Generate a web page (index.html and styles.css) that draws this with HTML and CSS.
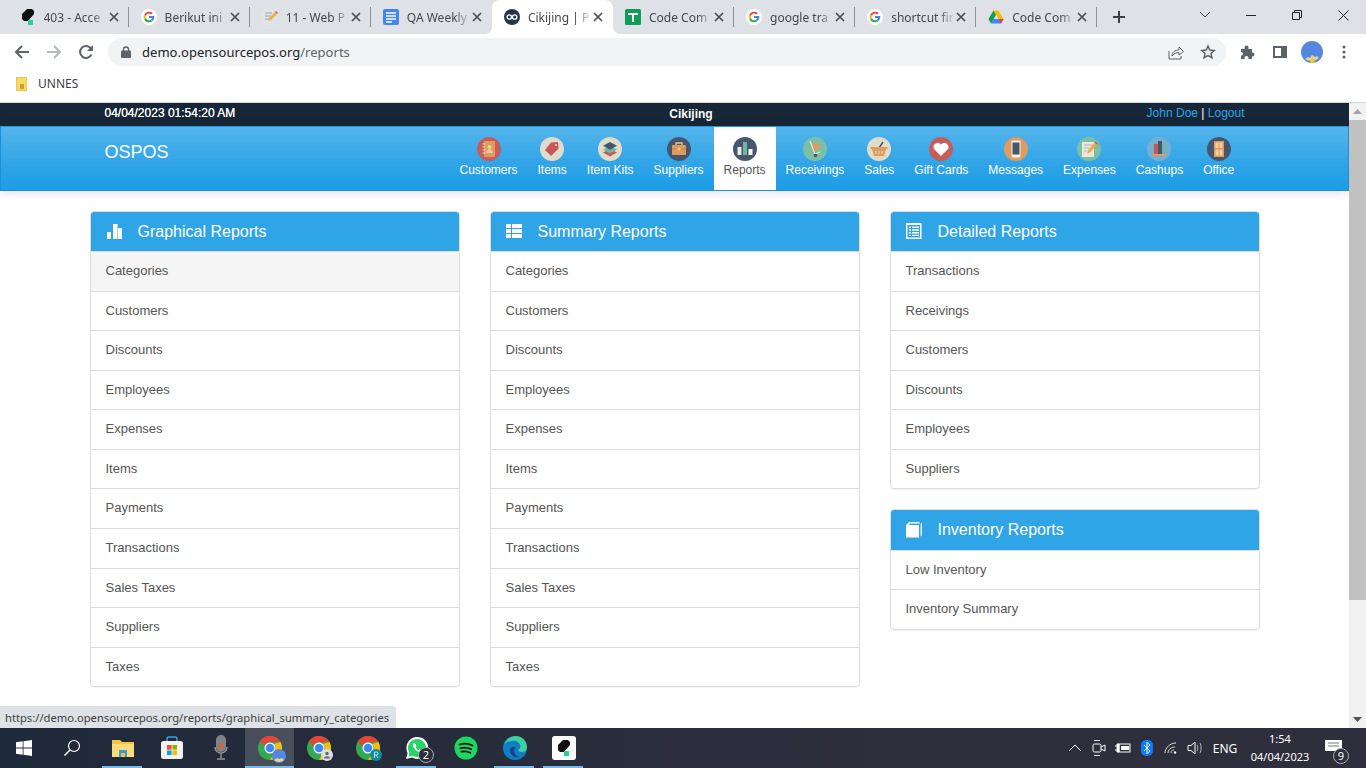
FILE: index.html
```html
<!DOCTYPE html>
<html>
<head>
	<title>Cikijing | Reports</title>
	<link rel="stylesheet" href="styles.css">
</head>
<body>
	<svg class="defs">
		<symbol id="google" viewBox="0 0 16 16">
			<circle cx="8" cy="8" r="8" fill="#fff"/>
			<path d="M8 4.6a3.3 3.3 0 0 1 2.3.9l1.4-1.4A5.4 5.4 0 0 0 3.2 5.600l1.700 1.300A3.300 3.300 0 0 1 8 4.600z" fill="#ea4335"/>
			<path d="M4.900 9.100l-1.700 1.300A5.400 5.400 0 0 0 11.600 12l-1.600-1.300A3.300 3.300 0 0 1 4.900 9.100z" fill="#34a853"/>
			<path d="M4.900 9.100a3.400 3.400 0 0 1 0-2.200L3.200 5.600a5.400 5.400 0 0 0 0 4.800z" fill="#fbbc05"/>
			<path d="M13.300 8c0-.4 0-.7-.1-1H8v2h3a2.600 2.600 0 0 1-1 1.700l1.600 1.300A5.300 5.300 0 0 0 13.300 8z" fill="#4285f4"/>
		</symbol>
		<symbol id="chrome" viewBox="0 0 24 24">
			<circle cx="12" cy="12" r="12" fill="#34a853"/>
			<path d="M12 0a12 12 0 0 1 10.400 6H12a6 6 0 0 0-5.700 4.200L2.200 5A12 12 0 0 1 12 0z" fill="#ea4335"/>
			<path d="M22.400 6A12 12 0 0 1 12 24l5.200-9A6 6 0 0 0 16 8z" fill="#fbbc05"/>
			<circle cx="12" cy="12" r="5.500" fill="#fff"/>
			<circle cx="12" cy="12" r="4.300" fill="#4285f4"/>
		</symbol>
		<symbol id="wedge" viewBox="0 0 16 16">
			<path d="M7 0h5l2 2v3l-6 7H4l-2-2V5z" fill="#111"/>
			<rect x="8" y="11" width="5" height="5" fill="#1fd39b"/>
		</symbol>
		<symbol id="close" viewBox="0 0 10 10">
			<path d="M1 1l8 8M9 1l-8 8" stroke="#4a4d51" stroke-width="1.700" fill="none"/>
		</symbol>
	</svg>

	<div class="tabstrip">
		<div class="tab">
			<svg class="favicon"><use href="#wedge"/></svg>
			<span class="tab-title">403 - Acce</span>
			<svg class="tab-close"><use href="#close"/></svg>
		</div>
		<div class="tab">
			<svg class="favicon"><use href="#google"/></svg>
			<span class="tab-title">Berikut ini</span>
			<svg class="tab-close"><use href="#close"/></svg>
		</div>
		<div class="tab">
			<svg class="favicon" viewBox="0 0 16 16"><rect width="16" height="16" rx="2" fill="#dfe3ea"/><path d="M3 4h7M3 7h6M3 10h4" stroke="#9aa4b2"/><path d="M6 12l1-3 6-6 2 2-6 6z" fill="#f2b233"/><path d="M13 3l1-1 2 2-1 1z" fill="#e2574c"/></svg>
			<span class="tab-title">11 - Web P</span>
			<svg class="tab-close"><use href="#close"/></svg>
		</div>
		<div class="tab no-sep">
			<svg class="favicon" viewBox="0 0 16 16"><rect width="16" height="16" rx="2" fill="#4285f4"/><path d="M3 4h10M3 7h10M3 10h10M3 13h6" stroke="#fff" stroke-width="1.500"/></svg>
			<span class="tab-title">QA Weekly</span>
			<svg class="tab-close"><use href="#close"/></svg>
		</div>
		<div class="tab active">
			<svg class="favicon" viewBox="0 0 16 16"><circle cx="8" cy="8" r="8" fill="#24364b"/><circle cx="5.300" cy="8" r="2.200" fill="none" stroke="#fff" stroke-width="1.300"/><circle cx="10.700" cy="8" r="2.200" fill="none" stroke="#fff" stroke-width="1.300"/></svg>
			<span class="tab-title">Cikijing | P</span>
			<svg class="tab-close"><use href="#close"/></svg>
		</div>
		<div class="tab">
			<svg class="favicon" viewBox="0 0 16 16"><rect width="16" height="16" rx="1.500" fill="#0f9d58"/><path d="M3 5h10M8 5v8" stroke="#fff" stroke-width="2"/></svg>
			<span class="tab-title">Code Com</span>
			<svg class="tab-close"><use href="#close"/></svg>
		</div>
		<div class="tab">
			<svg class="favicon"><use href="#google"/></svg>
			<span class="tab-title">google tra</span>
			<svg class="tab-close"><use href="#close"/></svg>
		</div>
		<div class="tab">
			<svg class="favicon"><use href="#google"/></svg>
			<span class="tab-title">shortcut fir</span>
			<svg class="tab-close"><use href="#close"/></svg>
		</div>
		<div class="tab">
			<svg class="favicon" viewBox="0 0 16 16"><path d="M5.500 1.500h5l5 8.500h-5z" fill="#fbbc05"/><path d="M5.500 1.500L.5 10l2.500 4.500L8 6z" fill="#0f9d58"/><path d="M3 14.500h10l2.500-4.500H5.500z" fill="#4285f4"/><path d="M13 14.500l2.500-4.500h-5z" fill="#ea4335"/></svg>
			<span class="tab-title">Code Com</span>
			<svg class="tab-close"><use href="#close"/></svg>
		</div>
		<div class="new-tab">
			<svg width="14" height="14" viewBox="0 0 14 14"><path d="M7 1v12M1 7h12" stroke="#3c4043" stroke-width="2"/></svg>
		</div>
		<div class="window-btns">
			<div class="win-btn chevron"><svg width="12" height="8" viewBox="0 0 12 8"><path d="M1 1l5 5 5-5" fill="none" stroke="#3c4043"/></svg></div>
			<div class="win-btn"><svg width="10" height="10" viewBox="0 0 10 10"><path d="M0 5.500h10" stroke="#222"/></svg></div>
			<div class="win-btn"><svg width="10" height="10" viewBox="0 0 10 10"><path d="M.5 2.500h7v7h-7zM2.500 2.500v-2h7v7h-2" fill="none" stroke="#222"/></svg></div>
			<div class="win-btn"><svg width="11" height="11" viewBox="0 0 11 11"><path d="M.5.500l10 10M10.500.500l-10 10" stroke="#222"/></svg></div>
		</div>
	</div>

	<div class="toolbar">
		<div class="tool"><svg width="16" height="16" viewBox="0 0 16 16"><path d="M15 8H2M8 2L2 8l6 6" fill="none" stroke="#5f6368" stroke-width="2"/></svg></div>
		<div class="tool"><svg width="16" height="16" viewBox="0 0 16 16"><path d="M1 8h13M8 2l6 6-6 6" fill="none" stroke="#b4b7bb" stroke-width="2"/></svg></div>
		<div class="tool"><svg width="16" height="16" viewBox="0 0 16 16"><path d="M13.500 10.500A6 6 0 1 1 13 4.500" fill="none" stroke="#5f6368" stroke-width="2"/><path d="M15 1v6H9z" fill="#5f6368"/></svg></div>
		<div class="omnibox">
			<svg class="lock" width="10" height="12" viewBox="0 0 10 12"><path d="M2.500 5V3.500a2.500 2.500 0 0 1 5 0V5" fill="none" stroke="#5f6368" stroke-width="1.300"/><rect y="4.500" width="10" height="7.500" rx="1" fill="#5f6368"/></svg>
			<span class="url">demo.opensourcepos.org<span class="url-path">/reports</span></span>
			<span class="omni-icons">
				<svg width="16" height="16" viewBox="0 0 16 16"><path d="M1 7v8h12v-3" fill="none" stroke="#5f6368"/><path d="M4 12c0-4 3-6 7-6V3l4.500 4.500L11 11V8.500c-3 0-5 1-7 3.500z" fill="none" stroke="#5f6368"/></svg>
				<svg width="16" height="16" viewBox="0 0 16 16"><path d="M8 2l1.800 4 4.400.5-3.300 2.900 1 4.300L8 11.500l-3.900 2.200 1-4.300-3.300-2.900L6.200 6z" fill="none" stroke="#5f6368" stroke-width="1.500"/></svg>
			</span>
		</div>
		<div class="tool-group">
			<div class="tool-sm"><svg width="16" height="16" viewBox="0 0 16 16"><path d="M1 5h3.500V3.500a2 2 0 0 1 4 0V5H12v3.500h.5a2 2 0 0 1 0 4H12V15H8.500v-1a2 2 0 0 0-4 0v1H1v-3.500h1a2 2 0 0 0 0-3.500H1z" fill="#5f6368"/></svg></div>
			<div class="tool-sm"><svg width="14" height="12" viewBox="0 0 14 12"><rect x="1" y="1" width="12" height="10" fill="none" stroke="#5f6368" stroke-width="2"/><rect x="8" y="1" width="5" height="10" fill="#5f6368"/></svg></div>
			<div class="tool-sm"><svg width="22" height="22" viewBox="0 0 22 22"><circle cx="11" cy="11" r="11" fill="#5687e0"/><path d="M4 18l3-2 2 1 2-3 3 2 2-1 2 2a11 11 0 0 1-14 1z" fill="#e5d48f"/><path d="M9 22l1-4 3 0 1 4z" fill="#f2c81e"/></svg></div>
			<div class="tool-sm"><svg width="4" height="14" viewBox="0 0 4 14"><circle cx="2" cy="2" r="1.500" fill="#5f6368"/><circle cx="2" cy="7" r="1.500" fill="#5f6368"/><circle cx="2" cy="12" r="1.500" fill="#5f6368"/></svg></div>
		</div>
	</div>

	<div class="bookmarks">
		<svg width="12" height="14" viewBox="0 0 12 14"><rect width="11" height="14" fill="#f2c744"/><rect x="1" y="1" width="9" height="12" fill="#f7d96b"/><path d="M4 7h4v5H4z" fill="#c9a227"/></svg>
		<span>UNNES</span>
	</div>

	<div class="page">
		<div class="viewport">
			<div class="topbar">
				<div class="topbar-in">
					<div class="clock">04/04/2023 01:54:20 AM</div>
					<div class="company">Cikijing</div>
					<div class="user"><a>John Doe</a> <b>|</b> <a>Logout</a></div>
				</div>
			</div>
			<div class="navbar">
				<div class="navbar-in">
					<div class="brand">OSPOS</div>
					<ul class="menu">
						<li>
							<svg viewBox="0 0 24 24"><circle cx="12" cy="12" r="12" fill="#c65c5c"/><rect x="7" y="4" width="11" height="16" rx="1" fill="#e39b5b"/><path d="M5.500 7h3M5.500 10h3M5.500 13h3M5.500 16h3" stroke="#f0dcc4"/><circle cx="12.500" cy="10" r="2" fill="#f3cf9b"/><path d="M9.500 16c0-5 6-5 6 0z" fill="#f3cf9b"/></svg>
							Customers
						</li>
						<li>
							<svg viewBox="0 0 24 24"><circle cx="12" cy="12" r="12" fill="#e0dccb"/><path d="M11 5.500l7-.5.500 6.500-7.500 7.500-6-6z" fill="#c9575a"/><circle cx="16" cy="8" r="1" fill="#e0dccb"/></svg>
							Items
						</li>
						<li>
							<svg viewBox="0 0 24 24"><circle cx="12" cy="12" r="12" fill="#e0dccb"/><path d="M12 12l7 3.500-7 4-7-4z" fill="#c9575a"/><path d="M12 9l7 3.500-7 4-7-4z" fill="#6fb7a2"/><path d="M12 5l7 3.800-7 4-7-4z" fill="#47566f"/></svg>
							Item Kits
						</li>
						<li>
							<svg viewBox="0 0 24 24"><circle cx="12" cy="12" r="12" fill="#47566f"/><path d="M9 8V6h6v2" fill="none" stroke="#f0c48c" stroke-width="1.300"/><rect x="5" y="8" width="14" height="10" rx="1" fill="#e09b5e"/><path d="M5 12h14" stroke="#c9823f"/><rect x="10.500" y="11" width="3" height="2" fill="#f3cf9b"/></svg>
							Suppliers
						</li>
						<li class="current">
							<svg viewBox="0 0 24 24"><circle cx="12" cy="12" r="12" fill="#47566f"/><rect x="4.500" y="10" width="4" height="8" fill="#e8e8dc"/><rect x="10" y="5" width="4" height="13" fill="#6fb7a2"/><rect x="15.500" y="12" width="4" height="6" fill="#fff"/></svg>
							Reports
						</li>
						<li>
							<svg viewBox="0 0 24 24"><circle cx="12" cy="12" r="12" fill="#7bbfa6"/><path d="M7 4l5 13 5-2" fill="none" stroke="#e8e8dc" stroke-width="1.200"/><rect x="10" y="6" width="6" height="7" transform="rotate(-20 13 9)" fill="#e39b5b"/><circle cx="12.500" cy="18.500" r="1.800" fill="#47566f"/></svg>
							Receivings
						</li>
						<li>
							<svg viewBox="0 0 24 24"><circle cx="12" cy="12" r="12" fill="#e0dccb"/><path d="M12 11l4-6" stroke="#47566f" stroke-width="1.500"/><rect x="3.500" y="10" width="17" height="2" fill="#e09b5e"/><path d="M5 12h14l-2 7H7z" fill="#e09b5e"/><path d="M9 14v3M12 14v3M15 14v3" stroke="#f3dcb8"/></svg>
							Sales
						</li>
						<li>
							<svg viewBox="0 0 24 24"><circle cx="12" cy="12" r="12" fill="#c65c5c"/><path d="M12 19l-6.500-6.500a3.800 3.800 0 0 1 6.500-5 3.800 3.800 0 0 1 6.500 5z" fill="#fff"/></svg>
							Gift Cards
						</li>
						<li>
							<svg viewBox="0 0 24 24"><circle cx="12" cy="12" r="12" fill="#e09b5e"/><rect x="7.500" y="3.500" width="9" height="17" rx="1" fill="#f6f3ea"/><rect x="8.500" y="5.500" width="7" height="12" fill="#47566f"/></svg>
							Messages
						</li>
						<li>
							<svg viewBox="0 0 24 24"><circle cx="12" cy="12" r="12" fill="#7bbfa6"/><rect x="5" y="5" width="12" height="15" fill="#e8e8dc"/><path d="M7 8h8M7 11h5M7 14h3" stroke="#b5b8a5"/><path d="M10 17l1-4 6.500-7.500 2.500 2L13.500 15z" fill="#eea94f"/><path d="M17.500 5.500l1-1 2.500 2-1 1z" fill="#c9575a"/></svg>
							Expenses
						</li>
						<li>
							<svg viewBox="0 0 24 24"><circle cx="12" cy="12" r="12" fill="#76aed2"/><rect x="7" y="7" width="4" height="10" fill="#c9575a"/><rect x="11" y="4" width="4" height="13" fill="#47566f"/><rect x="15" y="6" width="3" height="11" fill="#6fb7a2"/><rect x="5" y="17" width="14" height="2" fill="#e09b5e"/></svg>
							Cashups
						</li>
						<li>
							<svg viewBox="0 0 24 24"><circle cx="12" cy="12" r="12" fill="#47566f"/><rect x="7" y="4" width="10" height="16" fill="#e09b5e"/><rect x="8.500" y="5.500" width="3" height="5.500" fill="#f3cf9b"/><rect x="12.500" y="5.500" width="3" height="5.500" fill="#f3cf9b"/><rect x="8.500" y="12.500" width="3" height="6" fill="#f3cf9b"/><rect x="12.500" y="12.500" width="3" height="6" fill="#f3cf9b"/></svg>
							Office
						</li>
					</ul>
				</div>
			</div>

			<div class="reports">
				<div class="col">
					<div class="panel">
						<div class="panel-head">
							<svg viewBox="0 0 16 16"><rect x="1" y="9" width="4" height="7"/><rect x="7" y="1" width="4.500" height="15"/><rect x="12" y="5" width="4" height="11"/></svg>
							Graphical Reports
						</div>
						<ul class="links">
							<li class="hover">Categories</li>
							<li>Customers</li>
							<li>Discounts</li>
							<li>Employees</li>
							<li>Expenses</li>
							<li>Items</li>
							<li>Payments</li>
							<li>Transactions</li>
							<li>Sales Taxes</li>
							<li>Suppliers</li>
							<li>Taxes</li>
						</ul>
					</div>
				</div>
				<div class="col">
					<div class="panel">
						<div class="panel-head">
							<svg viewBox="0 0 16 16"><path d="M0 1h5v4H0zM6 1h10v4H6zM0 6h5v4H0zM6 6h10v4H6zM0 11h5v4H0zM6 11h10v4H6z"/></svg>
							Summary Reports
						</div>
						<ul class="links">
							<li>Categories</li>
							<li>Customers</li>
							<li>Discounts</li>
							<li>Employees</li>
							<li>Expenses</li>
							<li>Items</li>
							<li>Payments</li>
							<li>Transactions</li>
							<li>Sales Taxes</li>
							<li>Suppliers</li>
							<li>Taxes</li>
						</ul>
					</div>
				</div>
				<div class="col">
					<div class="panel">
						<div class="panel-head">
							<svg viewBox="0 0 16 16"><path fill-rule="evenodd" d="M0 0h15.500v16H0zM1.500 2v12.500H14V2z"/><path d="M3 3.500h2V5H3zM6 3.500h7V5H6zM3 6.300h2v1.500H3zM6 6.300h7v1.500H6zM3 9h2v1.500H3zM6 9h7v1.500H6zM3 11.700h2v1.300H3zM6 11.700h7v1.300H6z"/></svg>
							Detailed Reports
						</div>
						<ul class="links">
							<li>Transactions</li>
							<li>Receivings</li>
							<li>Customers</li>
							<li>Discounts</li>
							<li>Employees</li>
							<li>Suppliers</li>
						</ul>
					</div>
					<div class="panel">
						<div class="panel-head">
							<svg viewBox="0 0 16 16"><path d="M0 3l3-3h10.500v1.500H4L2.500 3H13v12.500H0z"/><path d="M15 1h1v12.500l-1.500 1V2.500z" opacity=".85"/></svg>
							Inventory Reports
						</div>
						<ul class="links">
							<li>Low Inventory</li>
							<li>Inventory Summary</li>
						</ul>
					</div>
				</div>
			</div>
			<div class="status">https://demo.opensourcepos.org/reports/graphical_summary_categories</div>
		</div>
		<div class="scrollbar">
			<div class="arrow"><svg width="9" height="5" viewBox="0 0 9 5"><path d="M4.500 0L9 5H0z" fill="#a3a3a3"/></svg></div>
			<div class="track"><div class="thumb"></div></div>
			<div class="arrow"><svg width="9" height="5" viewBox="0 0 9 5"><path d="M0 0h9L4.500 5z" fill="#505050"/></svg></div>
		</div>
	</div>

	<div class="taskbar">
		<div class="task-fixed"><svg width="16" height="16" viewBox="0 0 16 16"><path d="M0 2.300l6.700-1v6.300H0zM7.500 1.200L16 0v7.600H7.500zM0 8.400h6.700v6.300l-6.700-1zM7.500 8.400H16V16l-8.500-1.200z" fill="#fff"/></svg></div>
		<div class="task-fixed"><svg width="18" height="18" viewBox="0 0 18 18"><circle cx="11" cy="7" r="5.500" fill="none" stroke="#fff" stroke-width="1.200"/><path d="M7 11l-5.500 5.500" stroke="#fff" stroke-width="1.500"/></svg></div>
		<div class="task open"><svg width="22" height="20" viewBox="0 0 22 20"><path d="M0 2h8l2 2h12v15H0z" fill="#f5c344"/><path d="M0 6h22v13H0z" fill="#fbdc78"/><path d="M7 12h8v7H7z" fill="#3a9bdc"/><path d="M9 15h4v4H9z" fill="#f5c344"/></svg></div>
		<div class="task"><svg width="24" height="24" viewBox="0 0 24 24"><path d="M7 6V3a2 2 0 0 1 2-2h6a2 2 0 0 1 2 2v3" fill="none" stroke="#2fa4e7" stroke-width="1.500"/><rect x="1" y="5" width="22" height="18" rx="2.500" fill="#f3f3f3"/><rect x="7" y="9" width="4.600" height="4.600" fill="#f25022"/><rect x="12.400" y="9" width="4.600" height="4.600" fill="#7fba00"/><rect x="7" y="14.400" width="4.600" height="4.600" fill="#00a4ef"/><rect x="12.400" y="14.400" width="4.600" height="4.600" fill="#ffb900"/></svg></div>
		<div class="task"><svg width="14" height="26" viewBox="0 0 14 26"><rect x="2" y="0" width="10" height="17" rx="5" fill="#7f8388"/><circle cx="7" cy="11" r="2.300" fill="#ef5a24"/><path d="M1 12a6 6 0 0 0 12 0M7 18v5M3 24h8" fill="none" stroke="#8f9297" stroke-width="1.500"/></svg></div>
		<div class="task active open">
			<svg width="24" height="24"><use href="#chrome"/></svg>
			<svg class="corner-pic" width="14" height="14" viewBox="0 0 14 14"><circle cx="7" cy="7" r="7" fill="#5687e0"/><path d="M2 11l3-2 2 1 3-1 2 2a7 7 0 0 1-10 0z" fill="#e5d48f"/></svg>
		</div>
		<div class="task">
			<svg width="24" height="24"><use href="#chrome"/></svg>
			<svg class="corner-pic" width="12" height="12" viewBox="0 0 12 12"><circle cx="6" cy="6" r="6" fill="#dcdfe3"/><circle cx="6" cy="4.500" r="1.700" fill="#666"/><path d="M3 9.500c0-3 6-3 6 0z" fill="#666"/></svg>
		</div>
		<div class="task">
			<svg width="24" height="24"><use href="#chrome"/></svg>
			<svg class="corner-pic" width="12" height="12" viewBox="0 0 12 12"><circle cx="6" cy="6" r="6" fill="#128c9c"/><path d="M4.500 3v6M4.500 3h2a1.500 1.500 0 0 1 0 3h-2M6 6l2 3" fill="none" stroke="#bde" /></svg>
		</div>
		<div class="task open">
			<svg width="24" height="24" viewBox="0 0 24 24"><path d="M1 23l1.600-6A11 11 0 1 1 7 21.500z" fill="#fff"/><path d="M3.500 20.500l1-3.600A9 9 0 1 1 7.600 19.800z" fill="#25d366"/><path d="M9 7c-1 .5-1.500 1.500-1 3 1 3 3 5 6 6 1.500.5 2.500-.2 3-1.200l-2.300-1.500-1 1c-1.500-.6-2.500-1.700-3.200-3.200l1-1L9.800 7z" fill="#fff"/></svg>
			<span class="task-badge">2</span>
		</div>
		<div class="task"><svg width="24" height="24" viewBox="0 0 24 24"><circle cx="12" cy="12" r="11.500" fill="#1ed760"/><path d="M5.500 8.500c4-1.200 9-1 13 1M6.500 12.200c3.500-1 7.500-.7 10.800 1M7.500 15.700c3-.7 6-.5 8.800 1" fill="none" stroke="#111" stroke-width="1.800" stroke-linecap="round"/></svg></div>
		<div class="task open"><svg width="24" height="24" viewBox="0 0 24 24"><circle cx="12" cy="12" r="12" fill="#0f7fc4"/><path d="M1 9C3 3 8 0 13 0c6 0 11 5 11 11 0 3-2 5-5 5-2 0-4-1-4-2 2-1 3-3 2-5-1-3-4-5-8-4-4 0-7 2-8 4z" fill="#3fd0a0"/><path d="M10 11c-3 0-4 4-2 7 2 3 6 4 9 3-3 0-6-3-6-6 0-2 1-3 2-4z" fill="#1e3f8a"/></svg></div>
		<div class="task open"><svg width="24" height="24" viewBox="0 0 24 24"><rect width="24" height="24" rx="3" fill="#fff"/><use href="#wedge" x="4" y="4" width="16" height="16"/></svg></div>
		<div class="tray">
			<span class="tray-cell"><svg width="14" height="8" viewBox="0 0 14 8"><path d="M1 7l6-6 6 6" fill="none" stroke="#fff"/></svg></span>
			<span class="tray-cell"><svg width="14" height="18" viewBox="0 0 14 18"><path d="M2 1.500h6M2 16.500h6" stroke="#ddd"/><rect x="1" y="5" width="8" height="8" rx="1.500" fill="none" stroke="#fff"/><path d="M9 8l4-2v6l-4-2" fill="none" stroke="#fff"/></svg></span>
			<span class="tray-cell"><svg width="16" height="10" viewBox="0 0 16 10"><path d="M0 3h2M0 7h2M2 1h2v8H2z" stroke="#fff" fill="#fff"/><rect x="4" y="1" width="11" height="8" fill="none" stroke="#fff"/><rect x="6" y="3" width="8" height="4" fill="#fff"/></svg></span>
			<span class="tray-cell"><svg width="12" height="16" viewBox="0 0 12 16"><rect width="12" height="16" rx="5" fill="#0a7cff"/><path d="M3 5l6 6-3 3V2l3 3-6 6" fill="none" stroke="#fff"/></svg></span>
			<span class="tray-cell"><svg width="14" height="12" viewBox="0 0 14 12"><path d="M1 11C1 6 6 1 12 1M4 11c0-3 3-6 7-6M7 11c0-2 1-3 3-3" fill="none" stroke="#ddd"/><circle cx="11" cy="10.500" r="1.200" fill="#fff"/></svg></span>
			<span class="tray-cell"><svg width="16" height="14" viewBox="0 0 16 14"><path d="M1 4.500h3L8 1v12L4 9.500H1z" fill="none" stroke="#fff"/><path d="M10 4c1 2 1 4 0 6M13 2c1.500 3 1.500 7 0 10" fill="none" stroke="#bbb"/></svg></span>
			<span class="lang">ENG</span>
			<div class="time"><span>1:54</span><span>04/04/2023</span></div>
			<div class="notify">
				<svg width="17" height="13" viewBox="0 0 17 13"><path d="M0 0h17v11H0z" fill="#fff"/><path d="M3 3h11M3 6h11" stroke="#777"/></svg>
				<span class="notify-count">9</span>
			</div>
		</div>
	</div>
</body>
</html>
```

FILE: styles.css
```css
* {
	box-sizing: border-box;
}
html, body {
	margin: 0;
	height: 100%;
	overflow: hidden;
}
body {
	display: flex;
	flex-direction: column;
	font-family: "Liberation Sans", Arial, sans-serif;
	background: #fff;
}
ul {
	list-style: none;
	margin: 0;
	padding: 0;
}
.defs {
	display: none;
}

/* browser tabs */
.tabstrip {
	height: 34px;
	flex: none;
	display: flex;
	align-items: center;
	padding-left: 7.5px;
	background: #dee1e6;
	font-family: "Noto Sans", sans-serif;
	font-size: 12px;
	color: #45474a;
}
.tab {
	position: relative;
	width: 121.1px;
	height: 34px;
	flex: none;
	display: flex;
	align-items: center;
	padding-left: 12px;
}
.tab::after {
	content: "";
	position: absolute;
	right: 0;
	top: 7px;
	width: 1px;
	height: 20px;
	background: #8f9296;
}
.tab.no-sep::after {
	display: none;
}
.tab.active {
	background: #fff;
	border-radius: 8px 8px 0 0;
}
.tab.active::before,
.tab.active::after {
	content: "";
	position: absolute;
	top: auto;
	bottom: 0;
	width: 8px;
	height: 8px;
}
.tab.active::before {
	left: -8px;
	background: radial-gradient(circle at 0 0, transparent 8px, #fff 8.5px);
}
.tab.active::after {
	right: -8px;
	background: radial-gradient(circle at 100% 0, transparent 8px, #fff 8.5px);
}
.favicon {
	width: 16px;
	height: 16px;
	flex: none;
}
.tab-title {
	width: 64px;
	flex: none;
	margin-left: 8px;
	overflow: hidden;
	white-space: nowrap;
	-webkit-mask-image: linear-gradient(90deg, #000 75%, transparent);
	mask-image: linear-gradient(90deg, #000 75%, transparent);
}
.tab-close {
	width: 10px;
	height: 10px;
	flex: none;
	margin-left: 1px;
}
.new-tab {
	width: 44px;
	display: flex;
	justify-content: center;
}
.window-btns {
	margin-left: auto;
	display: flex;
	height: 34px;
	align-items: center;
}
.win-btn {
	width: 46px;
	height: 28px;
	margin-top: -4px;
	display: flex;
	align-items: center;
	justify-content: center;
}

/* address bar */
.toolbar {
	height: 36px;
	flex: none;
	display: flex;
	align-items: center;
	padding-left: 6px;
}
.tool {
	width: 32px;
	display: flex;
	justify-content: center;
}
.omnibox {
	width: 1118px;
	height: 28px;
	margin-left: 6px;
	display: flex;
	align-items: center;
	padding-left: 13px;
	background: #f1f3f4;
	border-radius: 14px;
	font-family: "Noto Sans", sans-serif;
	font-size: 13px;
	letter-spacing: .03px;
	color: #202124;
}
.url {
	margin-left: 11px;
}
.url-path {
	color: #5f6368;
}
.omni-icons {
	margin-left: auto;
	display: flex;
	gap: 16px;
	padding-right: 10px;
}
.tool-group {
	display: flex;
	align-items: center;
	margin-left: 6px;
}
.tool-sm {
	width: 32px;
	display: flex;
	justify-content: center;
}
.bookmarks {
	height: 33px;
	flex: none;
	display: flex;
	align-items: center;
	gap: 10px;
	padding: 0 0 5px 16px;
	border-bottom: 1px solid #d3d5d8;
	font-family: "Noto Sans", sans-serif;
	font-size: 12px;
	color: #3c4043;
}

/* page */
.page {
	flex: 1;
	min-height: 0;
	display: flex;
}
.viewport {
	position: relative;
	flex: 1;
	min-width: 0;
	overflow: hidden;
}
.scrollbar {
	width: 17px;
	flex: none;
	display: flex;
	flex-direction: column;
	background: #f1f1f1;
}
.arrow {
	height: 17px;
	flex: none;
	display: flex;
	align-items: center;
	justify-content: center;
}
.track {
	flex: 1;
}
.thumb {
	height: 480px;
	background: #c1c1c1;
}
.topbar {
	height: 23px;
	background: #172738;
	color: #fff;
	font-size: 12px;
}
.topbar-in {
	width: 1140px;
	margin: 0 auto;
	display: grid;
	grid-template-columns: 485px 203px 1fr;
	line-height: 21px;
}
.clock {
	text-shadow: 0 0 .4px #fff;
}
.company {
	font-weight: bold;
	text-align: center;
	line-height: 23px;
}
.user {
	text-align: right;
}
.user a {
	color: #2fa4e7;
}
.user b {
	font-weight: normal;
}
.navbar {
	position: relative;
	height: 65px;
	background: linear-gradient(#54b4eb, #2fa4e7 60%, #1d9ce5);
	border: 1px solid #1b8fd8;
	border-top-color: #1d9ce5;
	box-shadow: 0 2px 10px rgba(0, 0, 0, .12);
}
.navbar-in {
	width: 1140px;
	margin: 0 auto;
	display: flex;
}
.brand {
	font-size: 18px;
	line-height: 20px;
	padding-top: 15px;
	color: #fff;
	width: 345px;
}
.menu {
	display: flex;
	height: 63px;
}
.menu li {
	padding: 10px 10px 0;
	display: flex;
	flex-direction: column;
	align-items: center;
	font-size: 12px;
	color: #fff;
	white-space: nowrap;
	line-height: 14px;
	gap: 2px;
}
.menu li svg {
	width: 24px;
	height: 24px;
}
.menu li.current {
	background: #fff;
	color: #555;
}
.reports {
	width: 1170px;
	margin: 0 auto;
	padding-top: 20px;
	display: grid;
	grid-template-columns: repeat(3, 370px);
	column-gap: 30px;
}
.panel {
	border: 1px solid #ddd;
	border-radius: 4px;
	margin-bottom: 20px;
	box-shadow: 0 1px 1px rgba(0, 0, 0, .05);
	overflow: hidden;
}
.panel-head {
	height: 39px;
	display: flex;
	align-items: center;
	gap: 16px;
	padding: 0 15px;
	background: #2fa4e7;
	color: #fff;
	font-size: 16px;
}
.panel + .panel .panel-head {
	height: 39.5px;
}
.panel-head svg {
	width: 16px;
	height: 16px;
	margin-top: -1px;
	fill: #fff;
	flex: none;
}
.links {
	border-top: 1px solid #ddd;
}
.links li {
	padding: 10px 15px;
	font-size: 13px;
	line-height: 18.57px;
	color: #555;
	border-bottom: 1px solid #ddd;
}
.links li:last-child {
	border-bottom: 0;
}
.links li.hover {
	background: #f5f5f5;
}
.status {
	position: absolute;
	left: 0;
	bottom: 0;
	width: 396px;
	height: 22px;
	padding-left: 5px;
	line-height: 23px;
	background: #dee1e6;
	border-top-right-radius: 4px;
	font-family: "Noto Sans", sans-serif;
	font-size: 11.2px;
	color: #3c4043;
	white-space: nowrap;
}

/* windows taskbar */
.taskbar {
	height: 40px;
	flex: none;
	display: flex;
	align-items: center;
	background: linear-gradient(90deg, #1f2a3a, #2f2e3c 70%);
	color: #fff;
	font-family: "Noto Sans", sans-serif;
	font-size: 12px;
}
.task-fixed {
	width: 48px;
	height: 40px;
	flex: none;
	display: flex;
	align-items: center;
	justify-content: center;
}
.task-fixed + .task {
	margin-left: 2px;
}
.task {
	position: relative;
	width: 49px;
	height: 40px;
	flex: none;
	display: flex;
	align-items: center;
	justify-content: center;
}
.task.active {
	background: rgba(255, 255, 255, .17);
}
.task.open::after {
	content: "";
	position: absolute;
	left: 4px;
	right: 5px;
	bottom: 0;
	height: 2px;
	background: #76b9ed;
}
.task.active.open::after {
	left: 0;
	right: 0;
}
.corner-pic {
	position: absolute;
	left: 27px;
	top: 21px;
}
.task-badge {
	position: absolute;
	left: 26px;
	top: 19px;
	width: 16px;
	height: 16px;
	border-radius: 50%;
	background: #2b2f3b;
	border: 1px solid #aaa;
	font-size: 11px;
	line-height: 14px;
	text-align: center;
}
.tray {
	margin-left: auto;
	display: flex;
	align-items: center;
	height: 40px;
}
.tray-cell {
	width: 24px;
	display: flex;
	align-items: center;
	justify-content: center;
}
.lang {
	width: 30px;
	margin-left: 3px;
	text-align: center;
}
.time {
	width: 80px;
	display: flex;
	flex-direction: column;
	align-items: center;
	font-size: 11px;
	line-height: 18px;
}
.notify {
	position: relative;
	width: 46px;
	height: 40px;
	padding: 12px 0 0 5px;
}
.notify-count {
	position: absolute;
	left: 13px;
	top: 20px;
	width: 16px;
	height: 16px;
	border-radius: 50%;
	background: #2b2f3b;
	border: 1px solid #aaa;
	font-size: 11px;
	line-height: 14px;
	text-align: center;
}
```
